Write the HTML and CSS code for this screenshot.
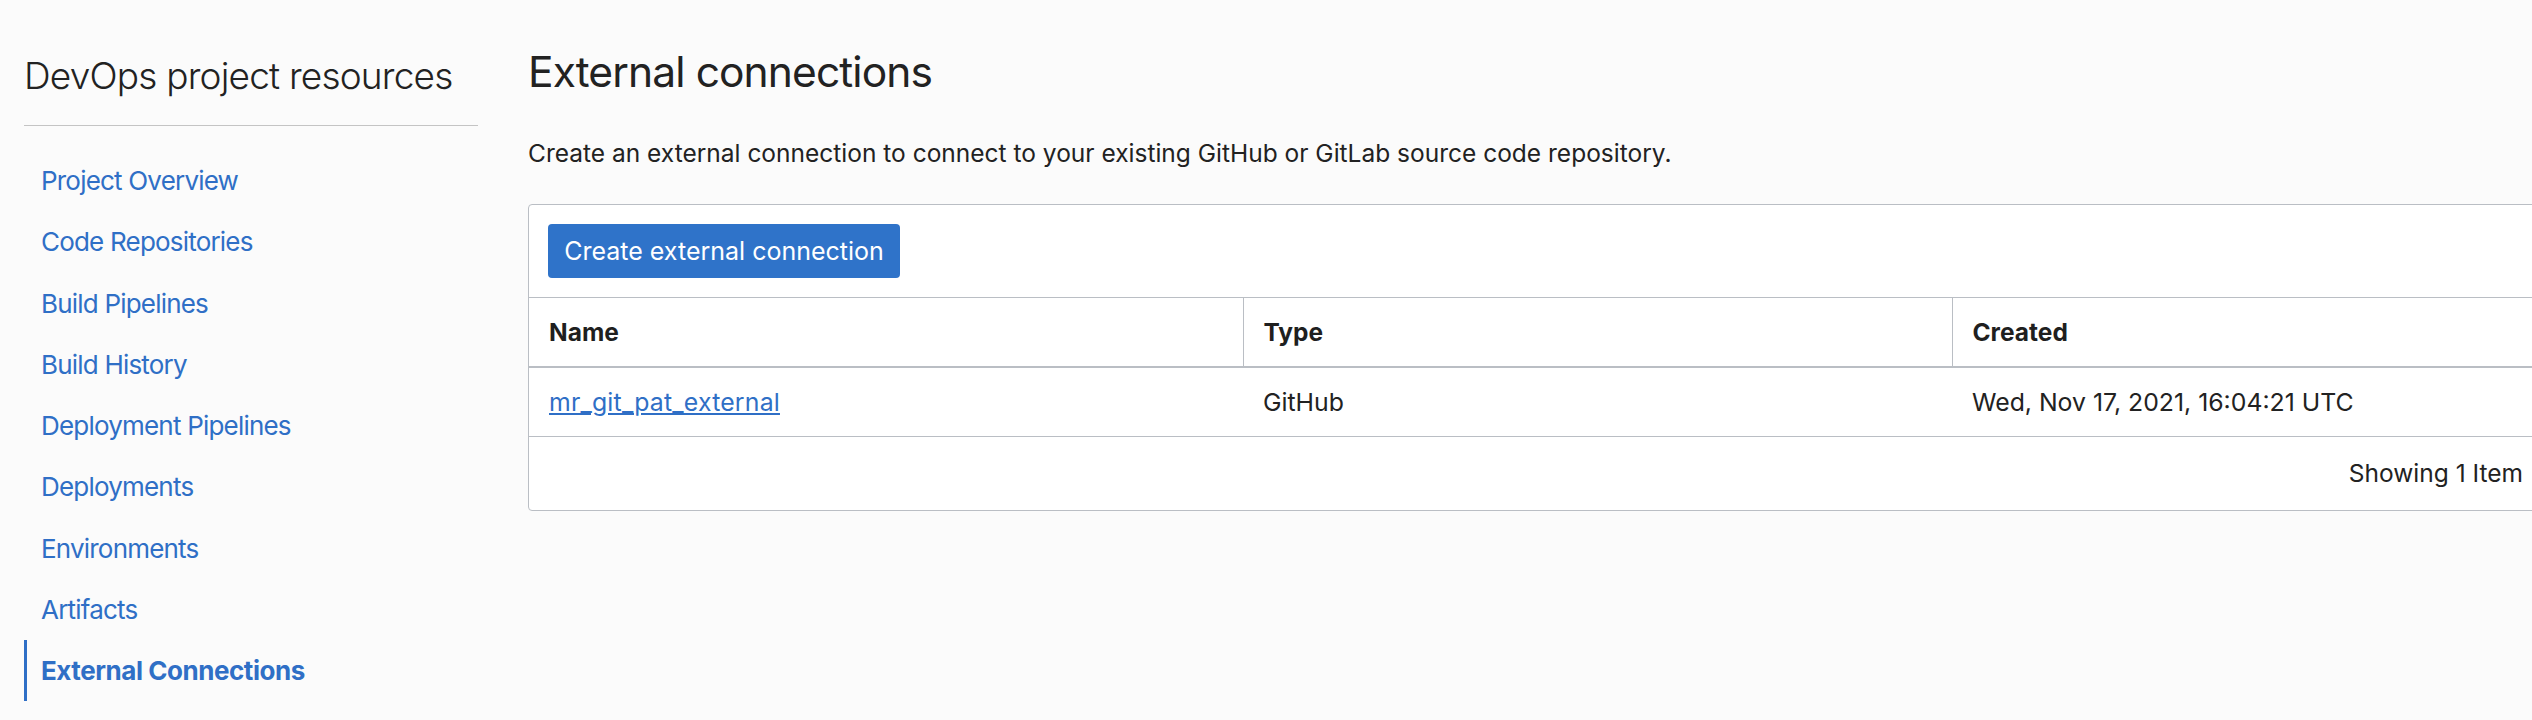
FILE: index.html
```html
<!DOCTYPE html>
<html lang="en">
<head>
<meta charset="utf-8">
<title>External connections</title>
<link rel="stylesheet" href="styles.css">
</head>
<body>
<div class="page">
  <aside class="sidebar">
    <h2 class="sidebar-title">DevOps project resources</h2>
    <nav class="nav">
      <a class="nav-item" href="#">Project Overview</a>
      <a class="nav-item" href="#">Code Repositories</a>
      <a class="nav-item" href="#">Build Pipelines</a>
      <a class="nav-item" href="#">Build History</a>
      <a class="nav-item" href="#">Deployment Pipelines</a>
      <a class="nav-item" href="#">Deployments</a>
      <a class="nav-item" href="#">Environments</a>
      <a class="nav-item" href="#">Artifacts</a>
      <a class="nav-item active" href="#">External Connections</a>
    </nav>
  </aside>
  <main class="main">
    <h1 class="title">External connections</h1>
    <p class="desc">Create an external connection to connect to your existing GitHub or GitLab source code repository.</p>
    <section class="card">
      <div class="toolbar">
        <button class="btn-primary" type="button">Create external connection</button>
      </div>
      <table class="table">
        <colgroup>
          <col class="col-name">
          <col class="col-type">
          <col class="col-created">
        </colgroup>
        <thead>
          <tr>
            <th>Name</th>
            <th>Type</th>
            <th>Created</th>
          </tr>
        </thead>
        <tbody>
          <tr>
            <td><a class="link" href="#">mr_git_pat_external</a></td>
            <td>GitHub</td>
            <td>Wed, Nov 17, 2021, 16:04:21 UTC</td>
          </tr>
        </tbody>
      </table>
      <div class="footer">Showing 1 Item</div>
    </section>
  </main>
</div>
</body>
</html>
```

FILE: styles.css
```css
html, body {
  margin: 0;
  padding: 0;
  background: #fbfbfb;
  overflow: hidden;
}

body {
  font-family: Inter, "Noto Sans", "Liberation Sans", sans-serif;
  color: #222426;
  width: 2532px;
  height: 720px;
}

.page {
  display: flex;
  align-items: flex-start;
  padding-left: 24px;
}

.sidebar {
  flex: 0 0 454px;
  width: 454px;
}

.sidebar-title {
  margin: 54px 0 0 0;
  font-size: 37px;
  line-height: 44px;
  font-weight: 300;
  color: #222;
  letter-spacing: -0.8px;
  padding-bottom: 27px;
  border-bottom: 1px solid #c4c4c4;
}

.nav {
  display: flex;
  flex-direction: column;
  margin-top: 24px;
}

.nav-item {
  display: block;
  height: 61.25px;
  line-height: 61.25px;
  padding-left: 14px;
  font-size: 26px;
  letter-spacing: -0.8px;
  color: #2f6fc6;
  text-decoration: none;
  border-left: 3px solid transparent;
}

.nav-item.active {
  border-left-color: #2f6fc6;
  font-weight: 700;
  letter-spacing: -0.45px;
}

.main {
  flex: 0 0 2016px;
  width: 2016px;
  margin-left: 50px;
}

.title {
  margin: 46px 0 0 0;
  font-size: 42.5px;
  line-height: 52px;
  font-weight: 400;
  color: #222;
  letter-spacing: -0.9px;
}

.desc {
  margin: 39px 0 0 0;
  font-size: 24.5px;
  line-height: 32px;
  color: #222;
}

.card {
  margin-top: 35px;
  background: #fff;
  border: 1px solid #babec4;
  border-radius: 4px;
  overflow: hidden;
}

.toolbar {
  padding: 19px 20px 19px 19px;
  border-bottom: 1px solid #babec4;
}

.btn-primary {
  display: block;
  height: 54px;
  width: 352px;
  padding: 0;
  border: none;
  border-radius: 4px;
  background: #2f73c9;
  color: #fff;
  font-family: Inter, "Noto Sans", "Liberation Sans", sans-serif;
  font-size: 25px;
  line-height: 54px;
  text-align: center;
}

.table {
  width: 100%;
  border-collapse: collapse;
  table-layout: fixed;
}

.col-name { width: 714px; }
.col-type { width: 709px; }

.table th {
  height: 68px;
  padding: 0 20px;
  text-align: left;
  font-size: 24.5px;
  font-weight: 700;
  color: #1f1f1f;
  border-bottom: 2px solid #babec4;
  border-right: 1px solid #babec4;
}

.table th:last-child {
  border-right: none;
}

.table td {
  height: 68px;
  padding: 0 20px;
  font-size: 24.8px;
  color: #222;
  border-bottom: 1px solid #babec4;
}

.link {
  color: #2f6fc6;
  text-decoration: underline;
  letter-spacing: 0.2px;
}

.footer {
  height: 73px;
  line-height: 73px;
  padding-right: 20px;
  text-align: right;
  font-size: 24.5px;
  color: #222;
}
```
